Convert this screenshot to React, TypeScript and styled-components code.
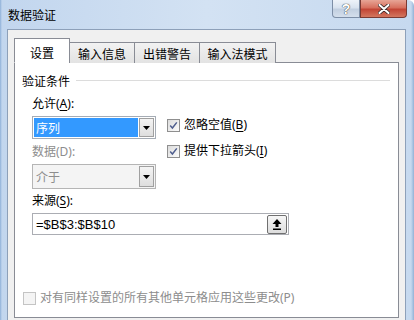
import React from "react";
import styled, { createGlobalStyle } from "styled-components";

const Global = createGlobalStyle`
  html, body {
    margin: 0;
    padding: 0;
    width: 414px;
    height: 320px;
    overflow: hidden;
    background: #fff;
  }
  body {
    font-family: "Noto Sans", "Noto Sans CJK SC", sans-serif;
    font-size: 12px;
    color: #000;
  }
`;

const Window = styled.div`
  width: 414px;
  height: 320px;
  overflow: hidden;
  box-sizing: border-box;
  background: linear-gradient(90deg, #8eb0d8 0px, #c2d6ee 2px, #d3e2f3 50%, #c6d9ef calc(100% - 3px), #93b2d6 100%);
  border-top-right-radius: 6px;
  padding: 0 8px 0 7px;
  display: flex;
  flex-direction: column;
`;

const TitleBar = styled.div`
  height: 29px;
  flex: 0 0 29px;
  display: flex;
  align-items: flex-start;
  justify-content: space-between;
`;

const Title = styled.span`
  margin-top: 7px;
  margin-left: 1px;
  line-height: 15px;
  font-family: "Noto Sans CJK SC", sans-serif;
  font-size: 12px;
`;

const Caption = styled.div`
  display: flex;
  margin-right: -1px;
`;

const CapButton = styled.div<{ $close?: boolean }>`
  width: ${(p) => (p.$close ? 47 : 28)}px;
  height: 18px;
  box-sizing: border-box;
  display: flex;
  align-items: center;
  justify-content: center;
  border: 1px solid ${(p) => (p.$close ? "#7a3a33" : "#7d8ea6")};
  border-top: none;
  border-radius: ${(p) => (p.$close ? "0 0 4px 0" : "0 0 0 4px")};
  background: ${(p) =>
    p.$close
      ? "linear-gradient(#e7a596, #d7705e 45%, #c24535 55%, #d3775f)"
      : "linear-gradient(#eef3f9, #d9e3ef 45%, #c2cfe0 55%, #d4dfec)"};
  font-family: "Liberation Sans", sans-serif;
  font-weight: bold;
  font-size: 14px;
  color: #fff;
  text-shadow: 0 0 1px #333, 0 0 1px #333;
`;

const Client = styled.div`
  flex: 1;
  background: #f0f0f0;
  border: 1px solid #8da0b9;
  border-bottom: none;
  padding: 8px 7px 0 6px;
`;

const TabStrip = styled.div`
  display: flex;
  align-items: flex-end;
  height: 25px;
  position: relative;
  z-index: 1;
`;

const Tab = styled.div<{ $active?: boolean; $w: number }>`
  width: ${(p) => p.$w}px;
  height: ${(p) => (p.$active ? 25 : 21)}px;
  box-sizing: border-box;
  display: flex;
  align-items: center;
  justify-content: center;
  border: 1px solid #898c95;
  border-bottom: ${(p) => (p.$active ? "1px solid #fff" : "none")};
  margin-left: ${(p) => (p.$active ? 0 : -1)}px;
  background: ${(p) => (p.$active ? "#fff" : "linear-gradient(#f2f2f2, #e3e3e3)")};
  font-family: "Noto Sans CJK SC", sans-serif;
  font-size: 12px;
  line-height: 15px;
  padding-top: ${(p) => (p.$active ? 3 : 1)}px;
`;

const Panel = styled.div`
  width: 385px;
  height: 256px;
  box-sizing: border-box;
  margin-top: -1px;
  background: #fff;
  border: 1px solid #898c95;
  display: flex;
  flex-direction: column;
  padding: 10px 0 11px 7px;
`;

const GroupHead = styled.div`
  display: flex;
  align-items: center;
  gap: 6px;
  font-family: "Noto Sans CJK SC", sans-serif;
  line-height: 15px;
  &::after {
    content: "";
    flex: 0 0 314px;
    height: 1px;
    background: #dcdcdc;
  }
`;

const Body = styled.div`
  display: flex;
  padding-left: 10px;
  margin-top: 8px;
`;

const LeftCol = styled.div`
  display: flex;
  flex-direction: column;
  width: 124px;
`;

const RightCol = styled.div`
  display: flex;
  flex-direction: column;
  gap: 10px;
  margin-left: 11px;
  padding-top: 21px;
`;

const Label = styled.div<{ $disabled?: boolean; $gap?: number }>`
  line-height: 16px;
  margin-top: ${(p) => p.$gap ?? 0}px;
  margin-bottom: 4px;
  color: ${(p) => (p.$disabled ? "#8d8d8d" : "#000")};
  white-space: nowrap;
  u {
    text-decoration: underline;
    text-underline-offset: 2px;
  }
`;

const Select = styled.div<{ $disabled?: boolean; $h: number }>`
  height: ${(p) => p.$h}px;
  box-sizing: border-box;
  display: flex;
  border: 1px solid ${(p) => (p.$disabled ? "#b5b5b5" : "#a5acb5")};
  background: ${(p) => (p.$disabled ? "#f4f4f4" : "#fff")};
  padding: 1px;
`;

const SelectValue = styled.div<{ $selected?: boolean; $disabled?: boolean }>`
  flex: 1;
  display: flex;
  align-items: center;
  padding-left: 2px;
  background: ${(p) => (p.$selected ? "#3399ff" : "transparent")};
  color: ${(p) => (p.$selected ? "#fff" : p.$disabled ? "#8d8d8d" : "#000")};
  font-family: "Noto Sans CJK SC", sans-serif;
  line-height: 15px;
`;

const DropButton = styled.div`
  width: 15px;
  margin-left: 1px;
  box-sizing: border-box;
  border: 1px solid #a0a0a0;
  background: linear-gradient(#f4f4f4, #dedede);
  display: flex;
  align-items: center;
  justify-content: center;
`;

const CheckRow = styled.div<{ $disabled?: boolean }>`
  display: flex;
  align-items: center;
  gap: 4px;
  white-space: nowrap;
  line-height: 16px;
  color: ${(p) => (p.$disabled ? "#8d8d8d" : "#000")};
  u {
    text-decoration: underline;
    text-underline-offset: 2px;
  }
`;

const Box = styled.div<{ $disabled?: boolean }>`
  width: 13px;
  height: 13px;
  box-sizing: border-box;
  border: 1px solid ${(p) => (p.$disabled ? "#c4c4c4" : "#8f8f8f")};
  background: ${(p) => (p.$disabled ? "#f4f4f4" : "linear-gradient(135deg, #dcdcdc, #fbfbfb)")};
  display: flex;
  align-items: center;
  justify-content: center;
`;

const SourceRow = styled.div`
  padding-left: 10px;
`;

const SourceInput = styled.div`
  width: 257px;
  height: 22px;
  box-sizing: border-box;
  border: 1px solid #abadb3;
  display: flex;
  align-items: center;
  justify-content: space-between;
  padding: 0 1px 0 3px;
  font-family: "Liberation Sans", sans-serif;
  font-size: 13px;
`;

const RefButton = styled.div`
  width: 20px;
  height: 19px;
  box-sizing: border-box;
  border: 1px solid #707070;
  border-radius: 2px;
  background: linear-gradient(#f6f6f6, #dddddd);
  display: flex;
  align-items: center;
  justify-content: center;
`;

const Footer = styled.div`
  margin-top: auto;
  padding-left: 1px;
`;

const Arrow = () => (
  <svg width="7" height="4" viewBox="0 0 7 4">
    <path d="M0 0h7L3.5 4z" fill="#000" />
  </svg>
);

const Check = () => (
  <svg width="9" height="9" viewBox="0 0 9 9">
    <path d="M1.2 4.6l2.2 2.4L7.8 1.4" stroke="#4f5e8e" strokeWidth="1.5" fill="none" />
  </svg>
);

const CheckBox = ({ checked, disabled, children }: { checked?: boolean; disabled?: boolean; children: React.ReactNode }) => (
  <CheckRow $disabled={disabled}>
    <Box $disabled={disabled}>{checked && <Check />}</Box>
    <span>{children}</span>
  </CheckRow>
);

export default function App() {
  return (
    <>
      <Global />
      <Window>
        <TitleBar>
          <Title>数据验证</Title>
          <Caption>
            <CapButton>?</CapButton>
            <CapButton $close>
              <svg width="12" height="10" viewBox="0 0 12 10">
                <path d="M1.5 1l9 8M10.5 1l-9 8" stroke="#3a2a2a" strokeWidth="3.6" strokeLinecap="round" />
                <path d="M1.5 1l9 8M10.5 1l-9 8" stroke="#fff" strokeWidth="2" strokeLinecap="round" />
              </svg>
            </CapButton>
          </Caption>
        </TitleBar>
        <Client>
          <TabStrip>
            <Tab $active $w={56}>设置</Tab>
            <Tab $w={66}>输入信息</Tab>
            <Tab $w={66}>出错警告</Tab>
            <Tab $w={77}>输入法模式</Tab>
          </TabStrip>
          <Panel>
            <GroupHead>验证条件</GroupHead>
            <Body>
              <LeftCol>
                <Label>
                  允许(<u>A</u>):
                </Label>
                <Select $h={23}>
                  <SelectValue $selected>序列</SelectValue>
                  <DropButton>
                    <Arrow />
                  </DropButton>
                </Select>
                <Label $disabled $gap={5}>
                  数据(D):
                </Label>
                <Select $disabled $h={25}>
                  <SelectValue $disabled>介于</SelectValue>
                  <DropButton>
                    <Arrow />
                  </DropButton>
                </Select>
                <Label $gap={4}>
                  来源(<u>S</u>):
                </Label>
              </LeftCol>
              <RightCol>
                <CheckBox checked>
                  忽略空值(<u>B</u>)
                </CheckBox>
                <CheckBox checked>
                  提供下拉箭头(<u>I</u>)
                </CheckBox>
              </RightCol>
            </Body>
            <SourceRow>
              <SourceInput>
                <span>=$B$3:$B$10</span>
                <RefButton>
                  <svg width="10" height="11" viewBox="0 0 10 11">
                    <path d="M5 0L9.5 5H6.5V8H3.5V5H0.5z" fill="#000" />
                    <rect x="1" y="9.5" width="8" height="1.5" fill="#000" />
                  </svg>
                </RefButton>
              </SourceInput>
            </SourceRow>
            <Footer>
              <CheckBox disabled>对有同样设置的所有其他单元格应用这些更改(P)</CheckBox>
            </Footer>
          </Panel>
        </Client>
      </Window>
    </>
  );
}
